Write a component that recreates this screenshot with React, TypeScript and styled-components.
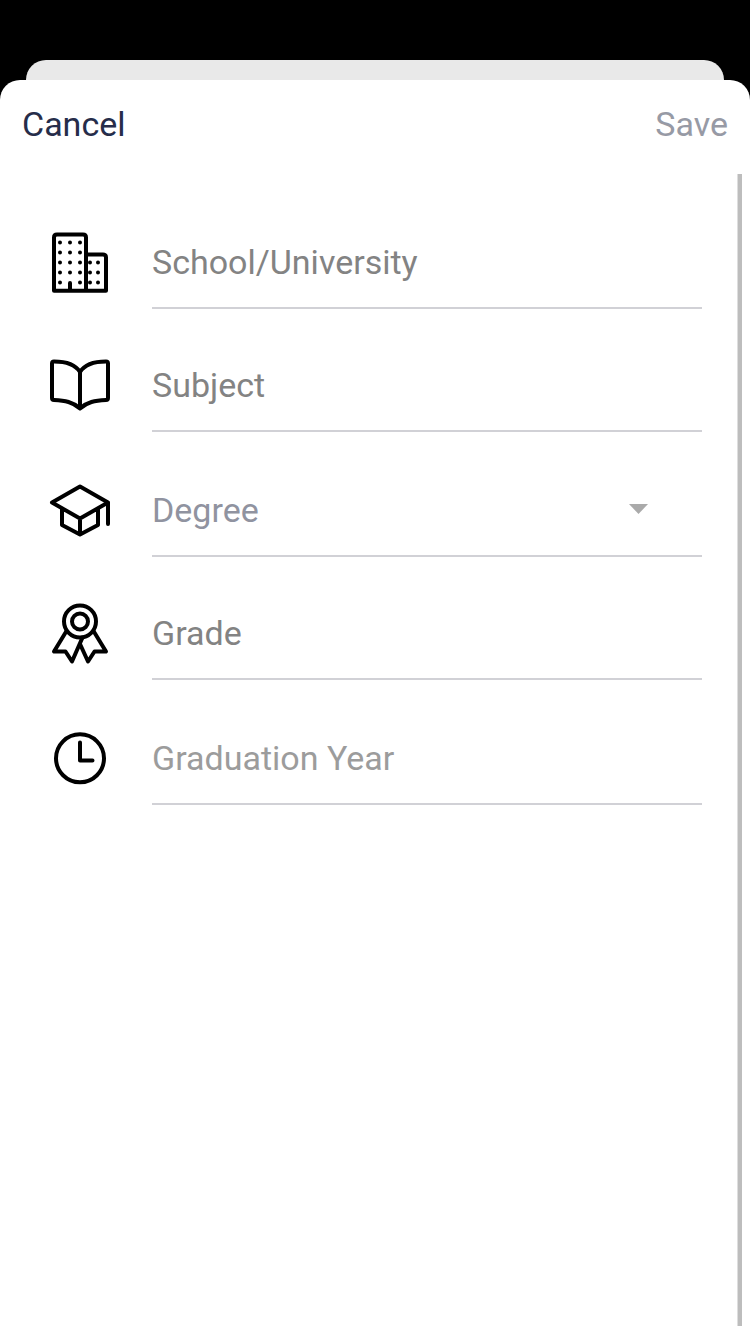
import React from "react";
import styled, { createGlobalStyle } from "styled-components";

const GlobalStyle = createGlobalStyle`
  *, *::before, *::after { box-sizing: border-box; }
  body { margin: 0; background: #000; font-family: Roboto, "Liberation Sans", sans-serif; }
`;

const Screen = styled.div`
  height: 1334px;
  padding-top: 60px;
  overflow: hidden;
  display: flex;
  flex-direction: column;
  background: #000;
`;

const BackSheet = styled.div`
  height: 20px;
  margin: 0 26px;
  border-radius: 20px 20px 0 0;
  background: #e9e9e9;
`;

const Sheet = styled.main`
  flex: 1;
  display: flex;
  flex-direction: column;
  border-radius: 20px 20px 0 0;
  background: #fff;
`;

const Toolbar = styled.header`
  height: 94px;
  padding: 0 22px;
  display: flex;
  align-items: center;
  justify-content: space-between;
`;

const ToolbarButton = styled.button<{ $muted?: boolean }>`
  border: 0;
  padding: 0 0 6px;
  background: none;
  font: 400 34px/40px Roboto, "Liberation Sans", sans-serif;
  color: ${(p) => (p.$muted ? "#979aa5" : "#262d4a")};
`;

const Body = styled.div`
  flex: 1;
  display: flex;
  justify-content: space-between;
  padding: 0 8px 8px 40px;
`;

const Form = styled.form`
  width: 663px;
  padding-top: 11px;
`;

const ScrollThumb = styled.div`
  width: 5px;
  background: linear-gradient(to right, #dedede 1px, #bdbdbd 1px);
`;

const Row = styled.div<{ $height: number }>`
  height: ${(p) => p.$height}px;
  display: flex;
  align-items: flex-end;
  gap: 32px;
`;

const Icon = styled.svg`
  width: 80px;
  height: 80px;
  margin-bottom: 7px;
  flex: none;
  fill: none;
  stroke: #000;
  stroke-width: 4;
  stroke-linejoin: round;
  stroke-linecap: round;
`;

const Field = styled.div<{ $color: string }>`
  width: 550.4px;
  height: 68px;
  display: flex;
  justify-content: space-between;
  border-bottom: 2px solid #d1d1d6;
  font-size: 34px;
  line-height: 42px;
  color: ${(p) => p.$color};
`;

const Caret = styled.svg`
  width: 19px;
  height: 10px;
  margin: 15px 54.4px 0 0;
  fill: #aaa;
`;

const dots = (xs: number[], ys: number[]) =>
  ys.flatMap((y) => xs.map((x) => <circle key={`${x}-${y}`} cx={x} cy={y} r="2" />));

const BuildingIcon = () => (
  <Icon viewBox="0 0 80 80">
    <path d="M14 68.7V15.500q0-3 3-3h26q3 0 3 3v53.200ZM46 32.500h17q3 0 3 3v33.200H46M30 61v7" />
    <g fill="#000" stroke="none">
      {dots([20, 30, 40], [20.5, 30.5, 40.5, 50.5])}
      {dots([20, 40], [60.5])}
      {dots([50, 58], [40.5, 50.5, 60.5])}
    </g>
  </Icon>
);

const BookIcon = () => (
  <Icon viewBox="0 0 80 80">
    <path d="M40 27C35 19 25 16.500 14 16.500q-2 0-2 2V53q0 2 2 2C25 55.500 33 57 40 63.500 47 57 55 55.500 66 55q2 0 2-2V18.500q0-2-2-2C55 16.500 45 19 40 27ZM40 27v36" />
  </Icon>
);

const DegreeIcon = () => (
  <Icon viewBox="0 0 80 80">
    <path d="M40 16.500 68 32.500 40 48.500 12 32.500ZM22 39v16l18 9.500 18-9.500V39M40 48.500V64M68 32.500V54" />
  </Icon>
);

const MedalIcon = () => (
  <Icon viewBox="0 -1 80 80">
    <circle cx="40" cy="27.500" r="16" />
    <circle cx="40" cy="27.500" r="8" />
    <path d="M26.500 37 14 57.500h11.500L32 67.500 42.500 43.500M53.500 37 66 57.500H54.500L48 67.500 40 50" />
  </Icon>
);

const ClockIcon = () => (
  <Icon viewBox="0 0 80 80">
    <circle cx="40" cy="40.300" r="24" />
    <path d="M40 24.500v18h12.500" />
  </Icon>
);

const fields = [
  { label: "School/University", icon: <BuildingIcon />, color: "#838383", height: 124 },
  { label: "Subject", icon: <BookIcon />, color: "#838383", height: 123 },
  { label: "Degree", icon: <DegreeIcon />, color: "#9093a0", height: 125, select: true },
  { label: "Grade", icon: <MedalIcon />, color: "#838383", height: 123 },
  { label: "Graduation Year", icon: <ClockIcon />, color: "#9c9c9c", height: 125 },
];

export default function App() {
  return (
    <>
      <GlobalStyle />
      <Screen>
        <BackSheet />
        <Sheet>
          <Toolbar>
            <ToolbarButton>Cancel</ToolbarButton>
            <ToolbarButton $muted>Save</ToolbarButton>
          </Toolbar>
          <Body>
            <Form>
              {fields.map((f) => (
                <Row key={f.label} $height={f.height}>
                  {f.icon}
                  <Field $color={f.color}>
                    {f.label}
                    {f.select && (
                      <Caret viewBox="0 0 19 10">
                        <path d="M0 0h19L9.500 10Z" />
                      </Caret>
                    )}
                  </Field>
                </Row>
              ))}
            </Form>
            <ScrollThumb />
          </Body>
        </Sheet>
      </Screen>
    </>
  );
}
